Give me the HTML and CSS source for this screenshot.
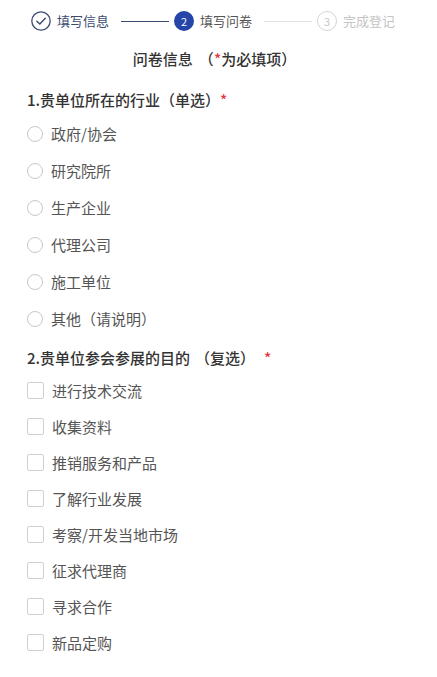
FILE: index.html
```html
<!DOCTYPE html>
<html lang="zh">
<head>
<meta charset="utf-8">
<link rel="stylesheet" href="styles.css">
</head>
<body>
<div class="page">
  <div class="steps">
    <div class="step done">
      <span class="circle"><svg width="20" height="20" viewBox="0 0 20 20"><circle cx="10" cy="10" r="9.2" fill="none" stroke="#3c4b70" stroke-width="1.3"/><path d="M5.8 10.2 L8.8 13.1 L14.3 7.2" fill="none" stroke="#3c4b70" stroke-width="1.4" stroke-linecap="round" stroke-linejoin="round"/></svg></span>
      <span class="label">填写信息</span>
    </div>
    <span class="line active"></span>
    <div class="step current">
      <span class="circle num">2</span>
      <span class="label">填写问卷</span>
    </div>
    <span class="line"></span>
    <div class="step todo">
      <span class="circle num">3</span>
      <span class="label">完成登记</span>
    </div>
  </div>

  <div class="title">问卷信息<span class="po">（</span><span class="req">*</span>为必填项）</div>

  <div class="question q1">1.贵单位所在的行业（单选）<span class="req">*</span></div>
  <ul class="options radios">
    <li><span class="radio"></span>政府/协会</li>
    <li><span class="radio"></span>研究院所</li>
    <li><span class="radio"></span>生产企业</li>
    <li><span class="radio"></span>代理公司</li>
    <li><span class="radio"></span>施工单位</li>
    <li><span class="radio"></span>其他（请说明）</li>
  </ul>

  <div class="question q2">2.贵单位参会参展的目的<span class="po">（</span>复选）<span class="gap"></span><span class="req">*</span></div>
  <ul class="options checks">
    <li><span class="check"></span>进行技术交流</li>
    <li><span class="check"></span>收集资料</li>
    <li><span class="check"></span>推销服务和产品</li>
    <li><span class="check"></span>了解行业发展</li>
    <li><span class="check"></span>考察/开发当地市场</li>
    <li><span class="check"></span>征求代理商</li>
    <li><span class="check"></span>寻求合作</li>
    <li><span class="check"></span>新品定购</li>
  </ul>
</div>
</body>
</html>
```

FILE: styles.css
```css
* { box-sizing: border-box; }
html, body { margin: 0; padding: 0; background: #fff; }
body {
  font-family: "Noto Sans CJK SC", "Noto Sans", sans-serif;
  color: #333;
}
.page { width: 437px; }

.steps {
  height: 42px;
  display: flex;
  align-items: center;
  padding-left: 31px;
}
.step { display: flex; align-items: center; gap: 6px; }
.circle {
  width: 20px; height: 20px;
  display: flex; align-items: center; justify-content: center;
  border-radius: 50%;
  font-size: 11px;
  line-height: 1;
}
.circle svg { display: block; }
.label { font-size: 13px; line-height: 20px; }
.done .label { color: #3c4b70; }
.current .circle { background: #2545a8; color: #fff; }
.current .label { color: #555; }
.todo .circle { border: 1.3px solid #d4d4d4; color: #c8c8c8; }
.todo .label { color: #c4c4c4; }
.line {
  width: 48px;
  height: 1px;
  background: #e2e2e2;
  margin: 0 6px 0 12px;
}
.line.active { background: #3c4b70; margin-right: 5px; }
.steps .line + .step.todo { margin-left: -1px; }

.title {
  text-align: center;
  font-size: 15px;
  font-weight: 500;
  line-height: 34px;
  color: #333;
  padding-right: 8px;
}
.po { margin-left: 6px; }
.req { color: #e0383e; }

.question {
  font-size: 15px;
  font-weight: 500;
  line-height: 24px;
  padding-left: 27px;
  color: #333;
}
.q2 .po { margin-left: 5px; }
.gap { display: inline-block; width: 9px; }
.q1 { margin-top: 12px; }
.q2 { margin-top: 9px; }

.options {
  list-style: none;
  margin: 0;
  padding: 0 0 0 27px;
}
.options li {
  display: flex;
  align-items: center;
  gap: 8px;
  font-size: 15px;
  color: #555;
}
.radios { margin-top: 3px; }
.radios li { height: 37px; }
.checks { margin-top: 2px; }
.checks li { height: 36px; }
.radio {
  width: 16px; height: 16px;
  border: 1px solid #c8c8c8;
  border-radius: 50%;
  flex: none;
}
.check {
  width: 17px; height: 17px;
  border: 1px solid #d0d0d0;
  border-radius: 2px;
  flex: none;
}
```
